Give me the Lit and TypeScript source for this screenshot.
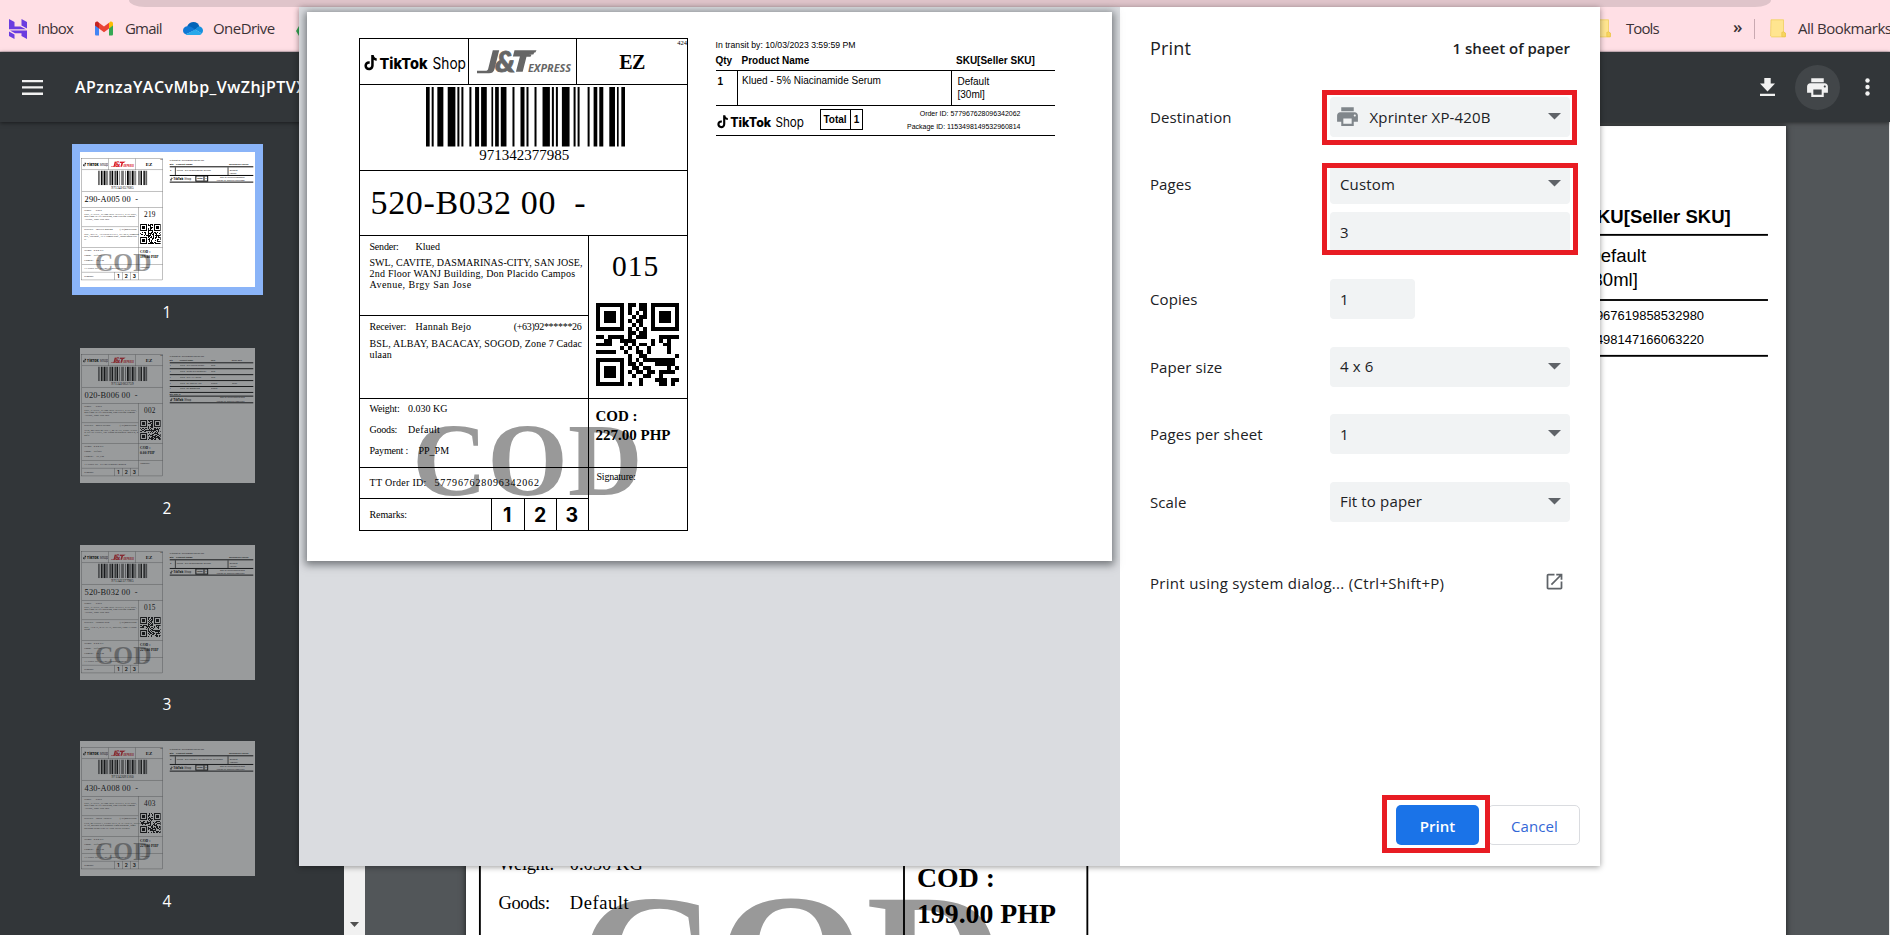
import { LitElement, html, svg, css, nothing } from "lit";
import { customElement, property } from "lit/decorators.js";
import { classMap } from "lit/directives/class-map.js";

interface Item { qty: string; name: string; sku: string[]; seller?: string }
interface Parcel {
  waybill: string; sort: string; zone: string;
  receiver: string; phone: string; address: string[];
  cod: string; orderId: string; packageId: string;
  watermark: boolean; colour: boolean; items: Item[]; seed: number;
}

const base: Parcel = {
  waybill: "971342377985", sort: "520-B032 00", zone: "015",
  receiver: "Hannah Bejo", phone: "(+63)92******26",
  address: ["BSL, ALBAY, BACACAY, SOGOD, Zone 7 Cadac", "ulaan"],
  cod: "227.00 PHP", orderId: "577967628096342062", packageId: "1153498149532960814",
  watermark: true, colour: false, seed: 0,
  items: [{ qty: "1", name: "Klued - 5% Niacinamide Serum", sku: ["Default", "[30ml]"] }],
};

const first: Parcel = {
  ...base, waybill: "971341657685", sort: "290-A005 00", zone: "219", receiver: "Jocelyn Mabano",
  address: ["SOL, RIZAL, ANTIPOLO CITY, INARES, Sampaco", "nes , Halipolo , 17-C Sampa bina , Bankerohan Hai", "zt"],
  cod: "199.00 PHP", orderId: "577967619858532980", packageId: "1153498147166063220", colour: true, seed: 7,
};

const parcels: Parcel[] = [
  first,
  {
    ...base, waybill: "971341662759", sort: "020-B006 00", zone: "002", receiver: "Maria Salinas",
    address: ["NCR, METRO-MANILA, MAKATI, POBLACION", "B GUADALUPE, The Grand Residences Tower 2, 2", "ndflr"],
    cod: "0.00 PHP", watermark: false, colour: true, seed: 19,
    items: [
      { qty: "1", name: "Klued - 10% Mineral Sunscr", sku: ["50ml"] },
      { qty: "1", name: "Klued - Gentle Gel Moisturizer", sku: ["50ml"] },
      { qty: "1", name: "Klued - 10% AHA Serum", sku: ["30ml"] },
      { qty: "1", name: "Klued - 2% Salicylic Acid", sku: ["Default"], seller: "[30ml]" },
      { qty: "1", name: "Klued - 5% Brightening", sku: ["Default"] },
    ],
  },
  { ...base, colour: true },
  {
    ...base, waybill: "971342091160", sort: "430-A008 00", zone: "403", receiver: "Judith Ancheta",
    address: ["CEB, MATIGUIA, CEBU CITY, KALANDAL, DULIT", "DAO, Malapat sa Kalundan Trigo Barasing , army", "building DUMTERETE FOR HCPP vicinity"],
    colour: true, seed: 41,
    items: [{ qty: "1", name: "Klued - 5% Intrigue Ceramamide Cleanser", sku: ["Default", "[120ml]"] }],
  },
];

const bars = [
  [260, 271], [277, 283], [294, 312], [325, 348], [354, 360], [366, 372], [390, 396], [407, 419], [425, 442],
  [456, 461], [467, 478], [484, 501], [519, 525], [543, 555], [561, 567], [585, 591], [609, 631], [637, 643],
  [649, 655], [667, 690], [702, 708], [714, 720], [744, 750], [762, 773], [779, 791], [809, 826], [832, 837], [845, 856],
];

const qrRows = [
  "#######.##.##.#######",
  "#.....#.#..##.#.....#",
  "#.###.#.#.#.#.#.###.#",
  "#.###.#..#.##.#.###.#",
  "#.###.#.#.##..#.###.#",
  "#.....#..#.#..#.....#",
  "#######.#.#.#.#######",
  "........##.##........",
  "##.####.#.###...#####",
  "..##..####....#.#.#..",
  "####...#.#.##.#..##..",
  "......#.#.#..#....#..",
  "#####..#..##.#....#..",
  "........#..##.......#",
  "#######.#.#.########.",
  "#.....#.##.#...#####.",
  "#.###.#..##.##....#.#",
  "#.###.#.#.##.##.####.",
  "#.###.#..#..##..#....",
  "#.....#....#...###.##",
  "#######.#..#....##.#.",
];

function qrCells(seed: number): string[] {
  if (!seed) return qrRows;
  let s = seed;
  return qrRows.map((row, y) => [...row].map((c, x) => {
    const finder = (x < 8 && y < 8) || (x > 12 && y < 8) || (x < 8 && y > 12);
    if (finder) return c;
    s = (s * 1103515245 + 12345) % 2147483648;
    return s / 2147483648 > 0.48 ? "#" : ".";
  }).join(""));
}

const printerPath = "M19 8H5c-1.66 0-3 1.34-3 3v6h4v4h12v-4h4v-6c0-1.66-1.34-3-3-3zm-3 11H8v-5h8v5zm3-7c-.55 0-1-.45-1-1s.45-1 1-1 1 .45 1 1-.45 1-1 1zm-1-9H6v4h12V3z";

const tiktokShop = html`
  <svg class="tiktok" width="102" height="18" viewBox="0 0 102 18">
    <path d="M7.2 1h2.5c.2 1.900 1.300 3 3 3.200v2.500c-1.100 0-2.100-.3-3-.9v5.400c0 3-2 5-4.700 5-2.700 0-4.600-2-4.600-4.500 0-2.900 2.300-4.900 5.300-4.500v2.600c-1.500-.4-2.700.5-2.700 1.900 0 1.100.9 2 2 2 1.300 0 2.200-.9 2.200-2.500z" fill="#000"/>
    <text class="tt-bold" x="15.500" y="15" textLength="48" lengthAdjust="spacingAndGlyphs">TikTok</text>
    <text class="tt-thin" x="68.500" y="15" textLength="33.500" lengthAdjust="spacingAndGlyphs">Shop</text>
  </svg>`;

@customElement("waybill-page")
class WaybillPage extends LitElement {
  @property({ attribute: false }) parcel: Parcel = base;

  static styles = css`
    :host { display: block; width: 713px; height: 550px; box-sizing: border-box; padding: 26px 0 0 7px; background: #fff; color: #000; font: 10px/11px "Liberation Serif", serif; white-space: nowrap; }
    .sheet { display: flex; align-items: flex-start; }
    .label { position: relative; isolation: isolate; box-sizing: border-box; width: 329px; height: 493px; border: 1.2px solid #000; }
    .watermark { position: absolute; z-index: -1; left: 52.500px; top: 370px; font: bold 103px/102px "Liberation Serif", serif; letter-spacing: .5px; color: #999; }
    .head, .bar, .sort { box-sizing: border-box; border-bottom: 1px solid #000; }
    .head { display: grid; grid-template-columns: 107.700px 108.300px 1fr; height: 46px; }
    .head > div { position: relative; display: flex; align-items: center; border-left: 1px solid #000; }
    .head > div:first-child { border: 0; padding: 3px 0 0 4px; }
    .tt-bold { font: 800 15px Inter, sans-serif; }
    .tt-thin { font: 400 15.500px Inter, sans-serif; }
    .jt { margin: 1px 0 0 8px; }
    .jt-main { font: italic 900 29px Lato, sans-serif; }
    .jt-sub { font: italic 700 10.700px "Open Sans", sans-serif; }
    .service { justify-content: center; font: bold 20px "Liberation Serif", serif; letter-spacing: -.5px; padding-top: 2px; }
    .corner { position: absolute; right: 0; top: 0; font: 6.500px/8px "Liberation Serif", serif; letter-spacing: 0; }
    .bar { display: flex; flex-direction: column; align-items: center; height: 86px; padding: 2px 0 0 4.500px; }
    .bar span { font-size: 15px; line-height: 16px; letter-spacing: 0; padding-right: 3px; }
    .sort { display: flex; align-items: center; height: 65px; padding: 0 0 1px 10.500px; font-size: 34px; letter-spacing: .65px; }
    .sort i { font-style: normal; margin-left: 18px; }
    .body { display: flex; }
    .left { box-sizing: border-box; width: 228.500px; border-right: 1px solid #000; }
    .cell { box-sizing: border-box; border-bottom: 1px solid #000; padding-left: 9.500px; }
    .sender { height: 80.400px; padding-top: 5px; }
    .receiver { height: 82.200px; padding-top: 5px; }
    .info { height: 69.400px; padding-top: 4px; }
    .order { height: 31.200px; padding-top: 9px; }
    .pair { display: flex; }
    .key { width: 46px; letter-spacing: -.2px; }
    .addr { margin-top: 4.500px; }
    .receiver .addr { margin-top: 5.500px; }
    .a1 { letter-spacing: .06px; } .a2 { letter-spacing: .24px; } .a3 { letter-spacing: .46px; } .a4 { letter-spacing: .15px; }
    .name { letter-spacing: .3px; flex: 1; }
    .phone { letter-spacing: -.3px; margin-right: 6px; }
    .info .key { width: 38.500px; }
    .info .pair { height: 21.200px; }
    .pay .key { width: 49px; }
    .order .key { width: 65px; letter-spacing: .28px; }
    .order .name { letter-spacing: .85px; }
    .remarks { display: grid; grid-template-columns: 130.800px 33px 32.500px 1fr; height: 31px; align-items: center; padding-left: 0; }
    .remarks span { padding: 0 0 1px 9.500px; letter-spacing: -.1px; }
    .remarks b { display: grid; place-items: center; height: 31px; border-left: 1px solid #000; font: 700 19.500px/1 Inter, sans-serif; box-sizing: border-box; padding: 2px 1px 0 0; }
    .right { flex: 1; }
    .route { box-sizing: border-box; height: 162.600px; border-bottom: 1px solid #000; padding: 14.500px 0 0 7px; }
    .route b { display: block; font: 29.500px/30px "Liberation Serif", serif; letter-spacing: 1px; padding-left: 16.500px; margin-bottom: 22px; }
    .amount { box-sizing: border-box; height: 69.400px; border-bottom: 1px solid #000; padding: 8px 0 0 7px; font: bold 15px/19.300px "Liberation Serif", serif; }
    .sign { padding: 3.500px 0 0 8px; letter-spacing: -.2px; }
    svg { display: block; flex: none; }

    .invoice { width: 339.500px; margin-left: 27.500px; padding-top: 1.500px; font: 10px/13px "Liberation Sans", sans-serif; }
    .transit { font-size: 8.700px; line-height: 11px; }
    .row { display: grid; grid-template-columns: 21px 214px 1fr; }
    .thead { font-weight: bold; line-height: 17px; height: 18px; padding-top: 1.500px; }
    .thead > *:nth-child(2) { padding-left: 5px; }
    .thead > *:nth-child(3) { padding-left: 5.500px; }
    .line { height: 35px; border-top: 1px solid #000; box-sizing: border-box; }
    .line > div { padding: 3px 0 0 4.500px; border-left: 1px solid #000; white-space: nowrap; }
    .line > div:first-child { border: 0; padding-left: 2px; font-weight: bold; padding-top: 4px; }
    .line > div:last-child { padding: 3.700px 0 0 6px; }
    .foot { display: flex; align-items: center; height: 30.500px; border: 1px solid #000; border-width: 1px 0; box-sizing: border-box; }
    .foot .tiktok { width: 87px; height: 16px; margin-left: 1px; margin-top: 3px; }
    .total { display: flex; box-sizing: border-box; height: 21px; margin-left: 16px; border: 1px solid #000; font: bold 10px/19px "Liberation Sans", sans-serif; margin-top: -1px; }
    .total b { padding: 0 3px; } .total b + b { border-left: 1px solid #000; }
    .ids { flex: 1; text-align: right; padding-right: 34.500px; font-size: 7px; line-height: 13px; }
    .multi .row { grid-template-columns: 41px 127px 84px 1fr; }
    .thumb .line, .thumb .foot { border-top-width: 4px; }
    .thumb .foot { border-bottom-width: 4px; }
    .thumb .total, .thumb .total b + b { border-width: 4px; border-color: #000; }
    .thumb .total { height: 25px; line-height: 17px; }
    .thumb .line > div + div { border-left-width: 3px; }
    .multi .line { height: 24px; font-size: 8px; line-height: 9px; }
    .multi .line > div, .multi .line > div + div { border: 0; padding-top: 3px; padding-left: 0; font-weight: normal; overflow: hidden; }
    .multi .thead { font-size: 8px; }
    .multi .thead > * { padding-left: 0 !important; }
    .sum { font: bold 8px/11px "Liberation Sans", sans-serif; border-top: 4px solid #000; }
  `;

  private invoice(p: Parcel) {
    const multi = p.items.length > 1;
    return html`
      <div class=${classMap({ invoice: true, multi, thumb: p.colour })}>
        <div class="transit">In transit by: 10/03/2023 3:59:59 PM</div>
        <div class="row thead"><div>Qty</div><div>Product Name</div><div>${multi ? "SKU" : "SKU[Seller SKU]"}</div>${multi ? html`<div>Seller SKU</div>` : nothing}</div>
        ${p.items.map((i) => html`
          <div class="row line"><div>${i.qty}</div><div>${i.name}</div><div>${i.sku.map((s) => html`${s}<br>`)}</div>${multi ? html`<div>${i.seller ?? ""}</div>` : nothing}</div>`)}
        ${multi ? html`<div class="sum">Qty Total: 5</div>` : nothing}
        <div class="foot">
          ${tiktokShop}
          ${multi ? nothing : html`<div class="total"><b>Total</b><b>1</b></div>`}
          <div class="ids">Order ID: ${p.orderId}<br>Package ID: ${p.packageId}</div>
        </div>
      </div>`;
  }

  render() {
    const p = this.parcel;
    const ink = p.colour ? "#d8202c" : "#666";
    return html`
      <div class="sheet">
        <div class="label">
          ${p.watermark ? html`<div class="watermark">COD</div>` : nothing}
          <div class="head">
            <div>${tiktokShop}</div>
            <div>
              <svg class="jt" width="98" height="26" viewBox="0 0 98 26" fill=${ink}>
                <path d="M0 22.500h8.500c1.500 0 2.300-.6 2.700-2L15.800 2h6.400l-4.600 18.500c-.8 3.300-2.400 4.500-5.600 4.500H0z" transform="translate(0 -.8)"/>
                <text class="jt-main" x="18" y="22.500" textLength="20" lengthAdjust="spacingAndGlyphs" stroke=${ink} stroke-width=".8">&amp;</text>
                <path d="M37.500 1.300h22l-1.200 2.200H54l3.300.1-1 2h-4.500l2.700.2-1 2h-4l-3.800 15h-6.800l4-15.300h-7z"/>
                <text class="jt-sub" x="51" y="22.500" textLength="43" lengthAdjust="spacingAndGlyphs">EXPRESS</text>
              </svg>
            </div>
            <div class="service">EZ<span class="corner">424</span></div>
          </div>
          <div class="bar">
            <svg width="199" height="59.500" viewBox="260 0 596 177" preserveAspectRatio="none">
              ${bars.map(([a, b]) => svg`<rect x=${a} width=${b - a} height="177"/>`)}
            </svg>
            <span>${p.waybill}</span>
          </div>
          <div class="sort">${p.sort}<i>-</i></div>
          <div class="body">
            <div class="left">
              <div class="cell sender">
                <div class="pair"><span class="key">Sender:</span><span>Klued</span></div>
                <div class="addr a1">SWL, CAVITE, DASMARINAS-CITY, SAN JOSE,</div>
                <div class="a2">2nd Floor WANJ Building, Don Placido Campos</div>
                <div class="a3">Avenue, Brgy San Jose</div>
              </div>
              <div class="cell receiver">
                <div class="pair"><span class="key">Receiver:</span><span class="name">${p.receiver}</span><span class="phone">${p.phone}</span></div>
                <div class="addr a4">${p.address.map((l) => html`${l}<br>`)}</div>
              </div>
              <div class="cell info">
                <div class="pair"><span class="key">Weight:</span><span>0.030 KG</span></div>
                <div class="pair"><span class="key">Goods:</span><span class="name">Default</span></div>
                <div class="pair pay"><span class="key">Payment :</span><span>PP_PM</span></div>
              </div>
              <div class="cell order pair"><span class="key">TT Order ID:</span><span class="name">${p.orderId}</span></div>
              <div class="remarks"><span>Remarks:</span><b>1</b><b>2</b><b>3</b></div>
            </div>
            <div class="right">
              <div class="route">
                <b>${p.zone}</b>
                <svg width="83" height="83" viewBox="0 0 21 21" shape-rendering="crispEdges">
                  ${qrCells(p.seed).map((row, y) => [...row].map((c, x) => c === "#" ? svg`<rect x=${x} y=${y} width="1" height="1"/>` : nothing))}
                </svg>
              </div>
              <div class="amount">COD :<br>${p.cod}</div>
              <div class="sign">Signature:</div>
            </div>
          </div>
        </div>
        ${this.invoice(p)}
      </div>`;
  }
}

@customElement("pdf-thumb")
class PdfThumb extends LitElement {
  @property({ attribute: false }) parcel: Parcel = base;
  @property({ type: Number }) index = 1;
  @property({ type: Boolean }) selected = false;
  static styles = css`
    :host { display: flex; flex-direction: column; align-items: center; height: 196.400px; }
    .frame { border: 8px solid transparent; }
    .view { width: 175px; height: 135px; overflow: hidden; opacity: .5; background: #fff; }
    .frame.on { border-color: #8ab4f8; }
    .on .view { opacity: 1; }
    waybill-page { transform: scale(.2465, .2468); transform-origin: 0 0; }
    .num { margin-top: 5.500px; font: 15.500px/22px "Open Sans", sans-serif; color: #fff; padding-right: 1px; }
  `;
  render() {
    return html`
      <div class=${classMap({ frame: true, on: this.selected })}><div class="view"><waybill-page .parcel=${this.parcel}></waybill-page></div></div>
      <div class="num">${this.index}</div>`;
  }
}

@customElement("print-dialog")
class PrintDialog extends LitElement {
  static styles = css`
    :host { display: flex; font: 15px/20px "Open Sans", sans-serif; color: #202124; background: #fff; box-shadow: 0 1px 6px rgba(0,0,0,.4); }
    .preview { width: 821px; background: #dadce0; box-sizing: border-box; padding: 5px 0 0 8px; }
    .paper { width: 805px; height: 549px; box-sizing: border-box; padding-left: 45px; background: #fff; overflow: hidden; }
    .shade { width: 805px; height: 549px; box-shadow: 0 2px 8px 2px rgba(60,64,67,.65); }
    .panel { flex: 1; display: flex; flex-direction: column; padding: 0 30px 0 30px; }
    .title { display: flex; justify-content: space-between; align-items: center; height: 81px; margin-bottom: 9px; }
    .title h1 { margin: 0; font-size: 18px; font-weight: 400; letter-spacing: .2px; }
    .title span { font-weight: 600; }
    .field { display: grid; grid-template-columns: 180px 1fr; height: 67.500px; align-items: start; }
    .field.top { height: 67px; }
    .field.tall { height: 115px; }
    .field label { line-height: 40px; letter-spacing: .1px; }
    .ctl { position: relative; display: flex; flex-direction: column; gap: 8px; }
    .box { display: flex; align-items: center; box-sizing: border-box; height: 40px; padding: 0 9px 1px 10px; background: #f1f3f4; border-radius: 4px; letter-spacing: .15px; }
    .box span { flex: 1; }
    .box .dest { margin: -1px 9.500px 0 -5px; }
    .box.short { width: 85px; }
    .mark { position: absolute; box-sizing: border-box; border: 5px solid #e81c23; }
    .m1 { left: -8px; top: -7px; width: 255px; height: 55px; }
    .m2 { left: -8px; top: -1px; width: 256px; height: 92px; }
    .m3 { left: -14px; top: -10px; width: 108px; height: 58px; }
    .system { display: flex; justify-content: space-between; align-items: center; height: 40px; margin-top: 13.500px; letter-spacing: .3px; }
    .system svg { margin: -2px 5px 0 0; }
    .buttons { display: flex; gap: 9px; margin: auto -10px 21px auto; }
    .slot { position: relative; }
    button { box-sizing: border-box; height: 40px; border-radius: 5px; font: 600 15px "Open Sans", sans-serif; padding: 1px 0 0; }
    .go { width: 83px; border: 0; background: #1a73e8; color: #fff; }
    .cancel { width: 92px; border: 1px solid #dadce0; background: #fff; color: #3367d6; font-weight: 500; padding-left: 1px; letter-spacing: .1px; }
    svg { display: block; }
  `;
  private arrow = html`<svg width="13" height="7" viewBox="0 0 13 7"><path d="M0 0h13L6.500 6.500z" fill="#5f6368"/></svg>`;
  private select(text: string) { return html`<div class="box"><span>${text}</span>${this.arrow}</div>`; }
  render() {
    return html`
      <div class="preview"><div class="shade"><div class="paper"><waybill-page></waybill-page></div></div></div>
      <div class="panel">
        <div class="title"><h1>Print</h1><span>1 sheet of paper</span></div>
        <div class="field top"><label>Destination</label><div class="ctl">
          <div class="box"><svg class="dest" width="25" height="25" viewBox="0 0 24 24" fill="#80868b"><path d=${printerPath}/></svg><span>Xprinter XP-420B</span>${this.arrow}</div>
          <div class="mark m1"></div></div></div>
        <div class="field tall"><label>Pages</label><div class="ctl">${this.select("Custom")}<div class="box"><span>3</span></div><div class="mark m2"></div></div></div>
        <div class="field"><label>Copies</label><div class="ctl"><div class="box short"><span>1</span></div></div></div>
        <div class="field"><label>Paper size</label><div class="ctl">${this.select("4 x 6")}</div></div>
        <div class="field"><label>Pages per sheet</label><div class="ctl">${this.select("1")}</div></div>
        <div class="field"><label>Scale</label><div class="ctl">${this.select("Fit to paper")}</div></div>
        <div class="system"><span>Print using system dialog... (Ctrl+Shift+P)</span>
          <svg width="21" height="21" viewBox="0 0 24 24" fill="#5f6368"><path d="M19 19H5V5h7V3H5c-1.110 0-2 .9-2 2v14c0 1.100.89 2 2 2h14c1.100 0 2-.9 2-2v-7h-2v7zM14 3v2h3.590l-9.830 9.830 1.410 1.410L19 6.410V10h2V3h-7z"/></svg></div>
        <div class="buttons"><div class="slot"><button class="go">Print</button><div class="mark m3"></div></div><button class="cancel">Cancel</button></div>
      </div>`;
  }
}

const folder = html`<svg width="17" height="19" viewBox="0 0 17 19"><path d="M1 .8h12.500v12.500l1.800.8v3.800H1.600L.6 17z" fill="#ffe58f" stroke="#f0cf60" stroke-width=".8"/><path d="M11.800 17.600v-4.200l1.700-.6 1.900 1.200v3.600z" fill="#f7d560" stroke="#e8c040" stroke-width=".6"/></svg>`;

@customElement("app-root")
class AppRoot extends LitElement {
  static styles = css`
    :host { display: flex; flex-direction: column; position: relative; width: 1890px; height: 935px; overflow: hidden; background: #525659; font: 15px/20px "Open Sans", sans-serif; }
    svg { display: block; flex: none; }
    .strip { height: 7px; background: #ffdfe5; flex: none; }
    .strip div { width: 1642px; height: 7px; margin-left: 129px; background: #dfc4ca; border-radius: 0 0 16px 16px / 0 0 7px 7px; }
    .bookmarks { display: flex; align-items: center; box-sizing: border-box; height: 45px; padding-bottom: 1px; flex: none; background: #ffdfe5; border-bottom: 1px solid #d9bfc6; color: #3c3236; }
    .bookmarks span { white-space: nowrap; margin-top: -1px; }
    .h { margin-left: 9px; } .bookmarks .inbox { margin-left: 10.500px; letter-spacing: -.8px; width: 57.500px; }
    .gmail { margin-left: 12px; letter-spacing: -.8px; width: 58px; }
    .drive { margin-left: 10px; letter-spacing: -.55px; width: 83px; }
    .spacer { flex: 1; }
    .tools { margin-left: 14px; letter-spacing: -.9px; width: 107px; }
    .bookmarks .more { font-weight: 600; width: 21px; margin-top: -4px; font-size: 17px; }
    .sep { width: 1px; height: 20px; background: #c9a9b1; margin-right: 15px; }
    .all { margin-left: 11px; width: 92px; letter-spacing: -.5px; }
    .toolbar { display: flex; align-items: center; box-sizing: border-box; height: 70px; flex: none; background: #323639; color: #fff; position: relative; z-index: 1; box-shadow: 0 1px 4px rgba(0,0,0,.5); padding-left: 22px; }
    .file { margin-left: 32px; flex: 1; font-weight: 600; font-size: 16px; letter-spacing: .46px; }
    .round { display: grid; place-items: center; width: 45px; height: 45px; border-radius: 50%; background: #424649; margin: 0 25px 0 20px; }
    .dots { margin-right: 20px; }
    .main { display: flex; flex: 1; min-height: 0; }
    .side { width: 344px; box-sizing: border-box; padding: 22px 9px 0 0; background: #323639; display: flex; flex-direction: column; overflow: hidden; }
    .side pdf-thumb { flex: none; }
    .scroll { display: flex; align-items: flex-end; justify-content: center; width: 21px; padding-bottom: 8px; box-sizing: border-box; background: #f1f1f1; }
    .viewer { flex: 1; padding: 4px 0 0 101px; overflow: hidden; border-right: 1px solid #e8e8e8; }
    .doc { width: 1320px; height: 1018px; background: #fff; box-shadow: 0 0 6px rgba(0,0,0,.7); overflow: hidden; }
    .doc waybill-page { transform: scale(1.852, 1.861); transform-origin: 0 0; }
    print-dialog { position: absolute; z-index: 2; left: 299px; top: 7px; width: 1301px; height: 859px; }
  `;
  render() {
    return html`
      <div class="strip"><div></div></div>
      <div class="bookmarks">
        <svg class="h" width="18" height="20" viewBox="0 0 18 20" fill="#6a3de0"><path d="M0 0l5.500 3v4.500h6L17 10.300H0zM12.500 0L18 3v6.500l-5.500-3zM1 11.500h17V20l-5.500-3v-2.700H6zM0 12.500l5.500 3V20L0 17z"/></svg>
        <span class="inbox">Inbox</span>
        <svg width="18" height="15" viewBox="0 0 18 14"><path d="M0 2v10.700C0 13.400.6 14 1.300 14H4V6z" fill="#4285f4"/><path d="M14 6v8h2.700c.7 0 1.300-.6 1.300-1.300V2z" fill="#34a853"/><path d="M14 1.500V7l4-3V1.900C18 .2 16.100-.6 14.800.4z" fill="#fbbc04"/><path d="M4 7V1.200l5 3.800 5-3.800V7l-5 3.800z" fill="#ea4335"/><path d="M0 1.900V4l4 3V1.200L3.200.4C1.900-.6 0 .2 0 1.900z" fill="#c5221f"/></svg>
        <span class="gmail">Gmail</span>
        <svg width="20" height="13" viewBox="0 0 20 13"><path d="M4 4.500C5.300 1.200 8 0 10.500 0c3 0 5.200 1.900 6 4.400L12 8z" fill="#0364b8"/><path d="M4.600 4.200c2 0 2.800.3 4 1l4 2.500L3 12.300c-2-.5-3-2-3-3.800 0-2.400 2-4.300 4.600-4.300z" fill="#0f78d4"/><path d="M16 4.400c2.400 0 4 1.900 4 4.100 0 1.200-.4 2.200-1.200 3l-6.300-3.800c1-2 1.800-3.200 3.500-3.300z" fill="#1490df"/><path d="M12.300 7.500l6.600 4c-.8 1-1.800 1.500-3.200 1.500H4.500c-.9 0-1.500-.2-2-.6z" fill="#28a8ea"/></svg>
        <span class="drive">OneDrive</span>
        <svg width="18" height="16" viewBox="0 0 18 16"><path d="M6 0h6l6 10h-6z" fill="#fbbc04"/><path d="M6 0L0 10l3 5 6-10z" fill="#34a853"/><path d="M3 15l3-5h12l-3 5z" fill="#4285f4"/></svg>
        <div class="spacer"></div>
        ${folder}<span class="tools">Tools</span><span class="more">»</span><div class="sep"></div>${folder}<span class="all">All Bookmarks</span>
      </div>
      <div class="toolbar">
        <svg width="21" height="15" viewBox="0 0 21 15" fill="#f1f1f1"><path d="M0 0h21v2.300H0zM0 6.300h21v2.300H0zM0 12.600h21V15H0z"/></svg>
        <span class="file">APznzaYACvMbp_VwZhjPTVX</span>
        <svg width="15" height="18" viewBox="0 0 15 18" fill="#f1f1f1"><path d="M4.300 0h6.400v5.600H15l-7.500 7.800L0 5.600h4.300zM0 15.700h15V18H0z"/></svg>
        <div class="round"><svg width="25" height="25" viewBox="0 0 24 24" fill="#f1f1f1"><path d=${printerPath}/></svg></div>
        <svg class="dots" width="5" height="18" viewBox="0 0 5 18" fill="#f1f1f1"><circle cx="2.500" cy="2.500" r="2.200"/><circle cx="2.500" cy="9" r="2.200"/><circle cx="2.500" cy="15.500" r="2.200"/></svg>
      </div>
      <div class="main">
        <div class="side">${parcels.map((p, i) => html`<pdf-thumb .parcel=${p} .index=${i + 1} ?selected=${i === 0}></pdf-thumb>`)}</div>
        <div class="scroll"><svg width="9" height="5" viewBox="0 0 9 5"><path d="M0 0h9L4.500 5z" fill="#505050"/></svg></div>
        <div class="viewer"><div class="doc"><waybill-page .parcel=${{ ...first, colour: false }}></waybill-page></div></div>
      </div>
      <print-dialog></print-dialog>`;
  }
}
